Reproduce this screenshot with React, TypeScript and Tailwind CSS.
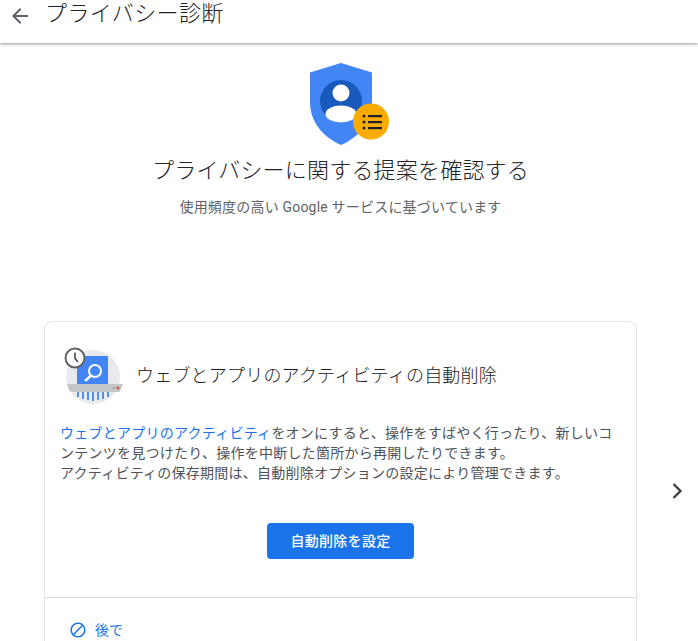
const jp = "font-['Roboto','Noto_Sans_CJK_JP',sans-serif]";

function ShieldIcon() {
  return (
    <svg width="101" height="86" viewBox="-1 0 101 86" className="block">
      <path d="M50 1 L81 10.5 V40 C81 60 68 75 50 83 C32 75 19 60 19 40 V10.5 Z" fill="#4285f4" />
      <circle cx="50" cy="39" r="21" fill="#185abc" />
      <circle cx="50" cy="31" r="8.5" fill="#fff" />
      <ellipse cx="50" cy="52" rx="15.5" ry="8.5" fill="#fff" />
      <circle cx="80" cy="59.5" r="18" fill="#f9ab00" />
      <circle cx="73" cy="54" r="1.5" fill="#202124" />
      <circle cx="73" cy="60" r="1.5" fill="#202124" />
      <circle cx="73" cy="66" r="1.5" fill="#202124" />
      <rect x="77" y="53" width="14" height="2.2" fill="#202124" />
      <rect x="77" y="59" width="14" height="2.2" fill="#202124" />
      <rect x="77" y="65" width="14" height="2.2" fill="#202124" />
    </svg>
  );
}

function ShredderIcon() {
  return (
    <svg width="60" height="58" viewBox="0 0 60 58" className="block">
      <circle cx="29" cy="30" r="27" fill="#e8eaed" />
      <rect x="13" y="9" width="31" height="28" rx="1" fill="#4285f4" />
      <circle cx="31" cy="24" r="6" fill="none" stroke="#fff" strokeWidth="2" />
      <path d="M27 28.5 L21 34" stroke="#fff" strokeWidth="2.5" />
      <path d="M3 37 H59 L56 44 Q56 45 52 45 H10 Q6 45 5 43 Z" fill="#c4c7ca" />
      <circle cx="54" cy="41" r="1.5" fill="#ea4335" />
      <circle cx="50" cy="41" r="1.2" fill="#9aa0a6" />
      <g stroke="#4285f4" strokeWidth="1.8">
        <path d="M14 45 V50" />
        <path d="M19 45 V52" />
        <path d="M24 45 V53" />
        <path d="M29 45 V54" />
        <path d="M34 45 V53" />
        <path d="M39 45 V52" />
        <path d="M44 45 V50" />
      </g>
      <circle cx="11" cy="11" r="9.5" fill="#fff" stroke="#5f6368" strokeWidth="2" />
      <path d="M11 5.5 V11.5 L14 15" fill="none" stroke="#3c4043" strokeWidth="1.5" />
    </svg>
  );
}

export default function App() {
  return (
    <div className={`h-[641px] w-[698px] overflow-hidden bg-white ${jp}`}>
      <header className="flex h-[43px] items-start bg-white pl-[8px] shadow-[0_1px_3px_rgba(60,64,67,0.55)]">
        <svg width="24" height="24" viewBox="0 0 24 24" fill="#5f6368" className="mt-[4px]">
          <path d="M20 11H7.83l5.59-5.59L12 4l-8 8 8 8 1.41-1.41L7.83 13H20v-2z" />
        </svg>
        <h1 className="ml-[13px] text-[22px] font-light leading-[28px] tracking-[0.4px] text-[#202124]">プライバシー診断</h1>
      </header>

      <div className="flex">
        <main className="w-[681px] shrink-0 px-[44px]">
          <div className="flex flex-col items-center">
            <div className="mt-[19px]">
              <ShieldIcon />
            </div>
            <h2 className="mt-[8px] text-[22px] font-light leading-[30px] tracking-[0.2px] text-[#202124]">
              プライバシーに関する提案を確認する
            </h2>
            <p className="mt-[11px] text-[14px] font-normal leading-[20px] tracking-[0.2px] text-[#5f6368]">
              使用頻度の高い Google サービスに基づいています
            </p>
          </div>

          <section className="mt-[104px] h-[400px] rounded-[8px] border border-[#e3e4e6]">
            <div className="flex items-center pl-[19px] pt-[25px]">
              <ShredderIcon />
              <h3 className="ml-[12px] text-[18px] font-light leading-[26px] tracking-[0.2px] text-[#202124]">
                ウェブとアプリのアクティビティの自動削除
              </h3>
            </div>
            <p className="mt-[18px] whitespace-nowrap pl-[15px] text-[14px] font-normal leading-[20px] tracking-[0.25px] text-[#4f5357]">
              <span className="text-[#1a73e8]">ウェブとアプリのアクティビティ</span>
              をオンにすると、操作をすばやく行ったり、新しいコ
              <br />
              ンテンツを見つけたり、操作を中断した箇所から再開したりできます。
              <br />
              アクティビティの保存期間は、自動削除オプションの設定により管理できます。
            </p>
            <div className="mt-[40px] flex justify-center">
              <button className="h-[36px] w-[147px] rounded-[4px] bg-[#1a73e8] text-[14px] font-medium tracking-[0.3px] text-white">
                自動削除を設定
              </button>
            </div>
            <div className="mt-[38px] flex items-center border-t border-[#dadce0] pl-[24px] pt-[23px]">
              <svg width="18" height="18" viewBox="0 0 24 24" fill="#1a73e8">
                <path d="M12 2C6.48 2 2 6.48 2 12s4.48 10 10 10 10-4.48 10-10S17.52 2 12 2zM4 12c0-4.42 3.58-8 8-8 1.85 0 3.55.63 4.9 1.69L5.69 16.9C4.63 15.55 4 13.85 4 12zm8 8c-1.85 0-3.55-.63-4.9-1.69L18.31 7.1C19.37 8.45 20 10.15 20 12c0 4.42-3.58 8-8 8z" />
              </svg>
              <span className="ml-[8px] text-[14px] leading-[18px] text-[#1a73e8]">後で</span>
            </div>
          </section>
        </main>
        <div className="ml-[-18px] mt-[434px]">
          <svg width="28" height="28" viewBox="0 0 24 24" fill="#3c4043">
            <path d="M9.7 5.3 8.3 6.7 13.6 12l-5.3 5.3 1.4 1.4 6.7-6.7z" />
          </svg>
        </div>
      </div>
    </div>
  );
}
